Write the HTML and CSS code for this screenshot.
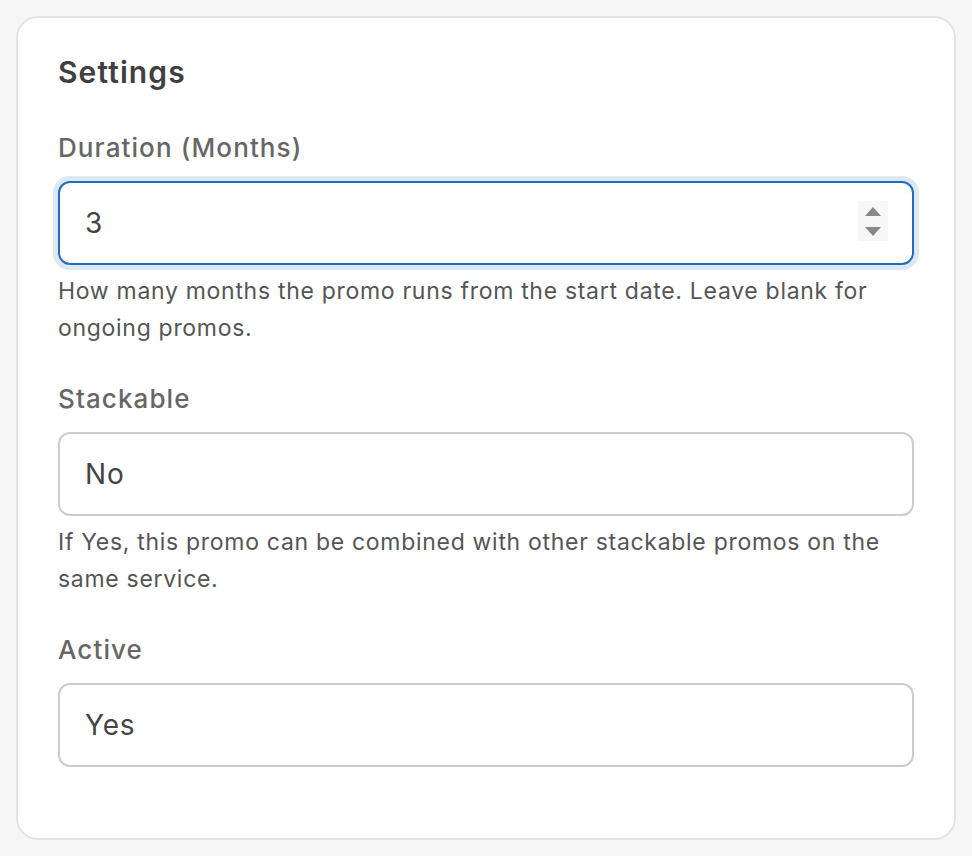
FILE: index.html
```html
<!DOCTYPE html>
<html lang="en">
<head>
<meta charset="utf-8">
<title>Settings</title>
<link rel="stylesheet" href="styles.css">
</head>
<body>
<section class="card">
  <h2 class="card-title">Settings</h2>

  <div class="field">
    <label class="field-label" for="duration">Duration (Months)</label>
    <div class="input-wrap">
      <input id="duration" class="field-input is-focused" type="text" value="3">
      <span class="spinner" aria-hidden="true">
        <span class="spin-up"></span>
        <span class="spin-down"></span>
      </span>
    </div>
    <p class="field-help">How many months the promo runs from the start date. Leave blank for ongoing promos.</p>
  </div>

  <div class="field">
    <label class="field-label" for="stackable">Stackable</label>
    <input id="stackable" class="field-input" type="text" value="No">
    <p class="field-help">If Yes, this promo can be combined with other stackable promos on the same service.</p>
  </div>

  <div class="field">
    <label class="field-label" for="active">Active</label>
    <input id="active" class="field-input" type="text" value="Yes">
  </div>
</section>
</body>
</html>
```

FILE: styles.css
```css
html, body {
  height: 100%;
}

body {
  margin: 0;
  padding: 16px;
  box-sizing: border-box;
  background: #f6f6f6;
  font-family: "Inter", "Noto Sans", sans-serif;
}

.card {
  box-sizing: border-box;
  height: 100%;
  background: #ffffff;
  border: 2px solid #e3e3e3;
  border-radius: 22px;
  padding: 36px 40px;
}

.card-title {
  margin: 0 0 41px;
  font-size: 30px;
  line-height: 36px;
  font-weight: 600;
  letter-spacing: 1.1px;
  color: #404040;
}

.field {
  margin-bottom: 36px;
}

.field-label {
  display: block;
  margin-bottom: 16px;
  font-size: 26px;
  line-height: 34px;
  font-weight: 500;
  letter-spacing: 1.1px;
  color: #666666;
}

.input-wrap {
  position: relative;
}

.field-input {
  display: block;
  box-sizing: border-box;
  width: 100%;
  height: 84px;
  margin: 0;
  padding: 0 25px;
  border: 2px solid #cccccc;
  border-radius: 12px;
  background: #ffffff;
  font-family: inherit;
  font-size: 28px;
  letter-spacing: 0.8px;
  color: #444444;
  outline: none;
}

.field-input.is-focused {
  border-color: #1d6fbd;
  box-shadow: 0 0 0 5px #dde8f4;
}

.spinner {
  position: absolute;
  top: 20px;
  right: 26px;
  width: 30px;
  height: 40px;
  background: #f7f7f7;
  display: flex;
  flex-direction: column;
  align-items: center;
  justify-content: center;
  gap: 11px;
}

.spin-up {
  width: 0;
  height: 0;
  border-left: 8px solid transparent;
  border-right: 8px solid transparent;
  border-bottom: 9px solid #888888;
}

.spin-down {
  width: 0;
  height: 0;
  border-left: 8px solid transparent;
  border-right: 8px solid transparent;
  border-top: 9px solid #888888;
}

.field-help {
  margin: 8px 0 0;
  font-size: 23px;
  line-height: 36.5px;
  letter-spacing: 0.7px;
  color: #555555;
}
```
